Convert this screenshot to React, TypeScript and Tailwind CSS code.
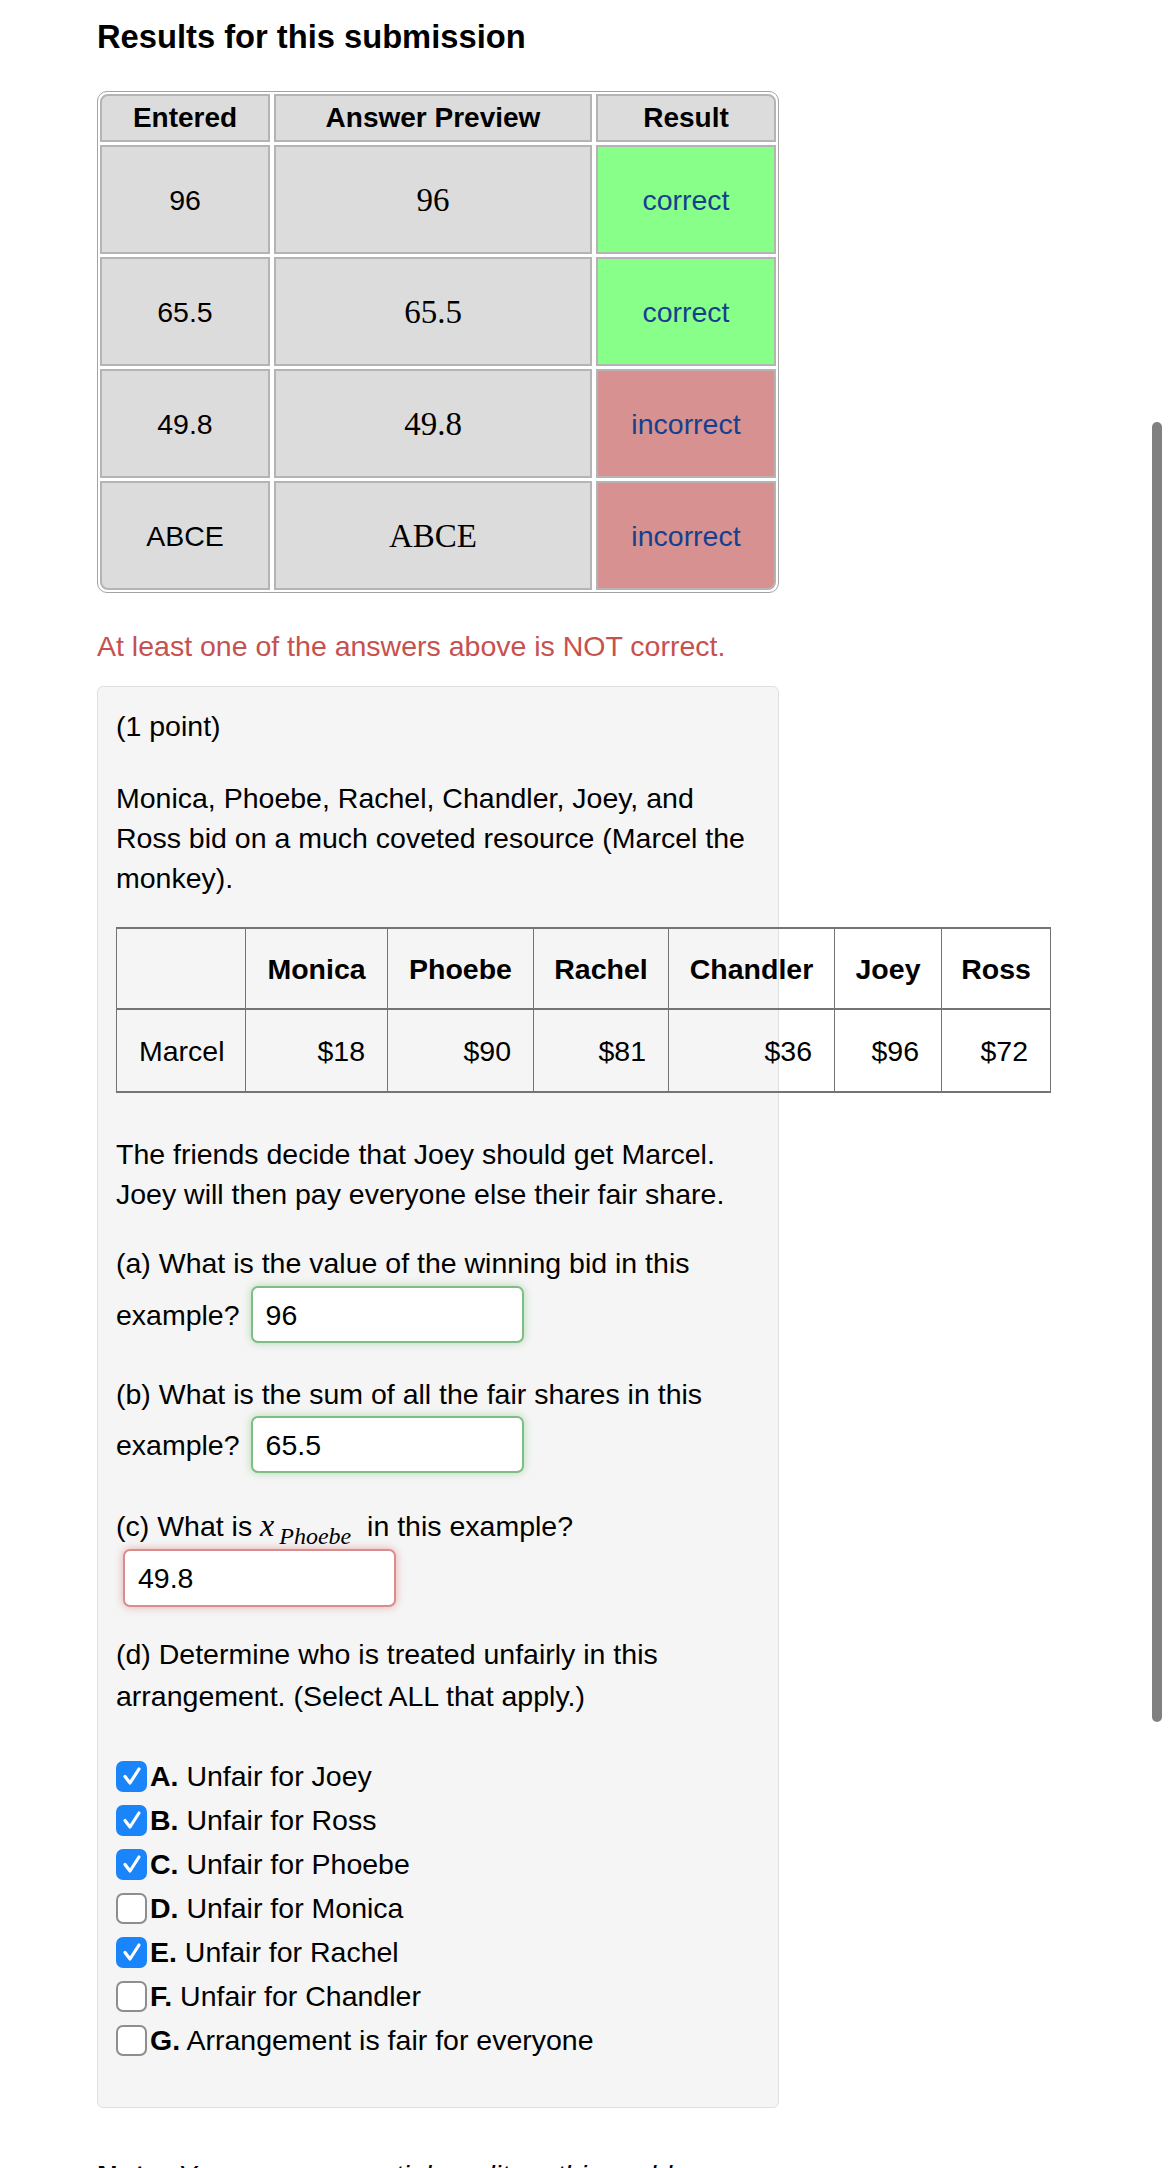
import React from 'react';

type Row = { entered: string; preview: string; ok: boolean };

const results: Row[] = [
  { entered: '96', preview: '96', ok: true },
  { entered: '65.5', preview: '65.5', ok: true },
  { entered: '49.8', preview: '49.8', ok: false },
  { entered: 'ABCE', preview: 'ABCE', ok: false },
];

const bids = [
  { name: 'Monica', bid: '$18', w: 'w-[142px]' },
  { name: 'Phoebe', bid: '$90', w: 'w-[146px]' },
  { name: 'Rachel', bid: '$81', w: 'w-[135px]' },
  { name: 'Chandler', bid: '$36', w: 'w-[166px]' },
  { name: 'Joey', bid: '$96', w: 'w-[107px]' },
  { name: 'Ross', bid: '$72', w: 'w-[109px]' },
];

const options = [
  { letter: 'A.', text: 'Unfair for Joey', checked: true },
  { letter: 'B.', text: 'Unfair for Ross', checked: true },
  { letter: 'C.', text: 'Unfair for Phoebe', checked: true },
  { letter: 'D.', text: 'Unfair for Monica', checked: false },
  { letter: 'E.', text: 'Unfair for Rachel', checked: true },
  { letter: 'F.', text: 'Unfair for Chandler', checked: false },
  { letter: 'G.', text: 'Arrangement is fair for everyone', checked: false },
];

const AnswerBox: React.FC<{ value: string; ok: boolean; className?: string }> = ({ value, ok, className }) => (
  <div
    className={`flex h-[57px] w-[273px] items-center rounded-[7px] bg-white pl-[13px] ${
      ok
        ? 'border-2 border-[#80bd82] shadow-[0_0_9px_rgba(92,184,92,0.45)]'
        : 'border-2 border-[#d98d8d] shadow-[0_0_9px_rgba(217,83,79,0.45)]'
    } ${className ?? ''}`}
  >
    {value}
  </div>
);

const Check: React.FC<{ checked: boolean }> = ({ checked }) =>
  checked ? (
    <div className="flex h-[31px] w-[31px] shrink-0 items-center justify-center rounded-[7px] bg-[#1a84fb]">
      <svg width="24" height="24" viewBox="0 0 24 24" fill="none">
        <path d="M5 12.5 L10 19 L19 5" stroke="white" strokeWidth="3.2" strokeLinecap="round" strokeLinejoin="round" />
      </svg>
    </div>
  ) : (
    <div className="h-[31px] w-[31px] shrink-0 rounded-[7px] border-[2.5px] border-[#8e8e8e] bg-white" />
  );

export default function App() {
  return (
    <div className="relative h-[2168px] w-[1170px] overflow-hidden bg-white font-['Liberation_Sans',Arial,sans-serif] text-[28.5px] leading-[40px] text-black">
      <div className="pl-[97px]">
        <h1 className="mt-[17px] text-[32.7px] font-bold leading-[40px]">Results for this submission</h1>

        {/* results table */}
        <div className="mt-[34px] w-[682px] rounded-[10px] border border-[#a3a3a3] p-[2px]">
          <div className="grid grid-cols-[170px_318px_180px] gap-x-[4px] gap-y-[3px]">
            <div className="flex h-[48px] items-center justify-center rounded-tl-[8px] border-2 border-[#b4b4b4] bg-[#dcdcdc] text-[28px] font-bold">
              Entered
            </div>
            <div className="flex h-[48px] items-center justify-center border-2 border-[#b4b4b4] bg-[#dcdcdc] text-[28px] font-bold">
              Answer Preview
            </div>
            <div className="flex h-[48px] items-center justify-center rounded-tr-[8px] border-2 border-[#b4b4b4] bg-[#dcdcdc] text-[28px] font-bold">
              Result
            </div>
            {results.map((r, i) => {
              const last = i === results.length - 1;
              return (
                <React.Fragment key={i}>
                  <div className={`flex h-[109px] items-center justify-center border-2 border-[#b4b4b4] bg-[#dcdcdc] ${last ? 'rounded-bl-[8px]' : ''}`}>
                    {r.entered}
                  </div>
                  <div className="flex h-[109px] items-center justify-center border-2 border-[#b4b4b4] bg-[#dcdcdc] font-['Liberation_Serif',serif] text-[33px]">
                    {r.preview}
                  </div>
                  <div
                    className={`flex h-[109px] items-center justify-center border-2 border-[#b4b4b4] text-[#163f8e] ${
                      r.ok ? 'bg-[#88ff88]' : 'bg-[#d79191]'
                    } ${last ? 'rounded-br-[8px]' : ''}`}
                  >
                    {r.ok ? 'correct' : 'incorrect'}
                  </div>
                </React.Fragment>
              );
            })}
          </div>
        </div>

        <p className="mt-[33px] text-[#c7514f]">At least one of the answers above is NOT correct.</p>

        {/* problem box */}
        <div className="mt-[20px] w-[682px] rounded-[6px] border border-[#e0e0e0] bg-[#f5f5f5] px-[18px] pb-[45px] pt-[19px]">
          <p>(1 point)</p>
          <p className="mt-[32px] w-[640px]">
            Monica, Phoebe, Rachel, Chandler, Joey, and Ross bid on a much coveted resource (Marcel the monkey).
          </p>

          <table className="mt-[29px] w-[934px] min-w-[934px] table-fixed border-collapse">
            <colgroup>
              <col className="w-[129px]" />
              {bids.map((b) => (
                <col key={b.name} className={b.w} />
              ))}
            </colgroup>
            <thead>
              <tr className="h-[81px] border-y-2 border-[#747474]">
                <th className="border-x border-[#747474]" />
                {bids.map((b) => (
                  <th key={b.name} className="border-x border-[#747474] text-center font-bold">
                    {b.name}
                  </th>
                ))}
              </tr>
            </thead>
            <tbody>
              <tr className="h-[83px] border-b-2 border-[#747474]">
                <td className="border-x border-[#747474] px-[22px] text-left">Marcel</td>
                {bids.map((b) => (
                  <td key={b.name} className="border-x border-[#747474] px-[22px] text-right">
                    {b.bid}
                  </td>
                ))}
              </tr>
            </tbody>
          </table>

          <p className="mt-[41px] w-[640px]">
            The friends decide that Joey should get Marcel. Joey will then pay everyone else their fair share.
          </p>

          <p className="mt-[29px]">(a) What is the value of the winning bid in this</p>
          <div className="mt-[3px] flex items-center gap-[11px]">
            <span>example?</span>
            <AnswerBox value="96" ok />
          </div>

          <p className="mt-[31px]">(b) What is the sum of all the fair shares in this</p>
          <div className="mt-[2px] flex items-center gap-[11px]">
            <span>example?</span>
            <AnswerBox value="65.5" ok />
          </div>

          <p className="mt-[32px] flex items-baseline">
            <span>(c) What is&nbsp;</span>
            <span className="font-['Liberation_Serif',serif] text-[32px] italic">x</span>
            <span className="relative top-[8px] ml-[5px] font-['Liberation_Serif',serif] text-[24px] italic">Phoebe</span>
            <span>&nbsp;&nbsp;in this example?</span>
          </p>
          <AnswerBox value="49.8" ok={false} className="ml-[7px] mt-[1px] h-[58px]" />

          <p className="mt-[26px] w-[640px] leading-[42px]">
            (d) Determine who is treated unfairly in this arrangement. (Select ALL that apply.)
          </p>

          <div className="mt-[37px] flex flex-col">
            {options.map((o) => (
              <div key={o.letter} className="flex h-[44px] items-center gap-[3px]">
                <Check checked={o.checked} />
                <span>
                  <b>{o.letter}</b> {o.text}
                </span>
              </div>
            ))}
          </div>
        </div>

        <p className="mt-[47px]">
          <b>Note:</b> <i>You can earn partial credit on this problem.</i>
        </p>
      </div>

      {/* scroll indicator */}
      <div className="absolute left-[1152px] top-[422px] h-[1300px] w-[10px] rounded-full bg-[#808080]" />
    </div>
  );
}
